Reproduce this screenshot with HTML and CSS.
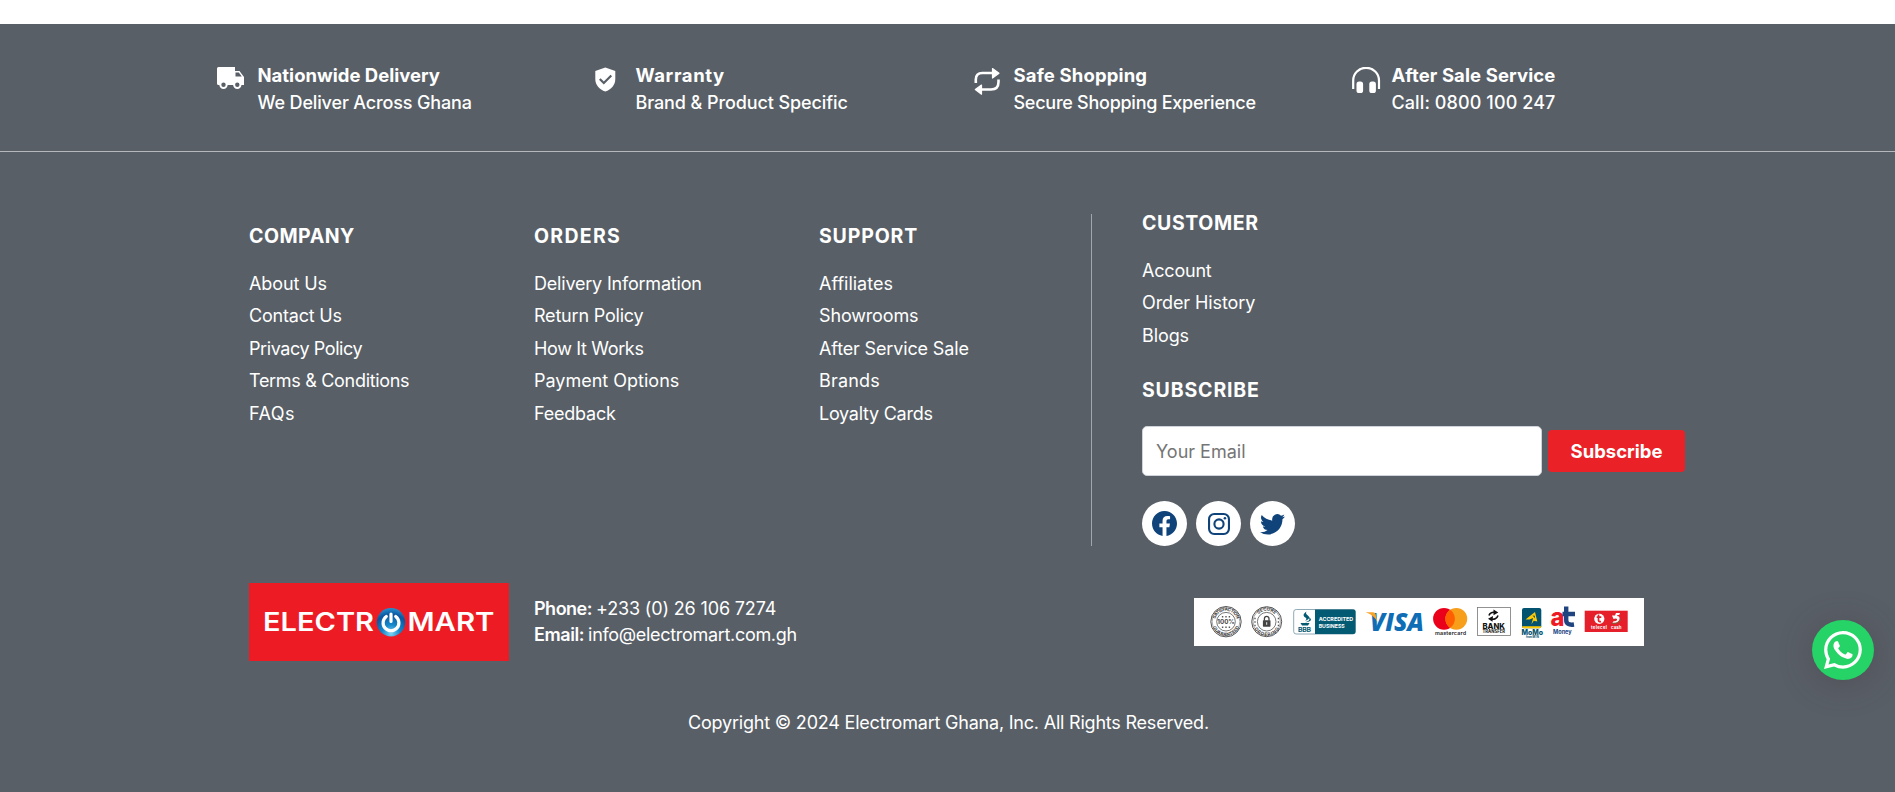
FILE: index.html
```
<!DOCTYPE html>
<html lang="en">
<head>
<meta charset="utf-8">
<title>Electromart Ghana</title>
<link rel="stylesheet" href="styles.css">
</head>
<body>
<footer class="footer">
  <section class="services">
    <div class="service">
      <svg class="service-icon" width="41" height="30" viewBox="0 0 41 30"><path fill="#fff" d="M1.500 0H18v4h4.500L27 10v8H1.500A1.500 1.500 0 0 1 0 16.500v-15A1.500 1.500 0 0 1 1.500 0z"/><path fill="#595f67" d="M18.500 5.600h3.300l3 3.900h-6.300z"/><g fill="#595f67" stroke="#fff" stroke-width="2"><circle cx="6.500" cy="17.800" r="3.200"/><circle cx="20.300" cy="17.800" r="3.200"/></g></svg>
      <div><p class="service-title">Nationwide Delivery</p><p class="service-text n15">We Deliver Across Ghana</p></div>
    </div>
    <div class="service">
      <svg class="service-icon" width="41" height="30" viewBox="0 0 41 30"><path fill="#fff" d="M10.300 .5 20.300 4v8c0 6-4 10.500-10 12.500C4.300 22.500.3 18 .3 12V4z"/><path fill="none" stroke="#595f67" stroke-width="2.200" d="m4.800 12 4 4 7.500-7.500"/></svg>
      <div><p class="service-title p60">Warranty</p><p class="service-text n10">Brand &amp; Product Specific</p></div>
    </div>
    <div class="service">
      <svg class="service-icon" width="41" height="30" viewBox="-1.500 0 41 30"><g fill="none" stroke="#fff" stroke-width="2.600"><path d="M1.300 16v-3.500q0-6.500 6.500-6.500H19M24 12.500V15q0 7.500-7.500 7.500H5"/></g><path fill="#fff" stroke="#fff" stroke-width="1.200" stroke-linejoin="round" d="m18 1.500 6.500 4.700L18 11zM7 18 .8 22.500 7 27.200z"/></svg>
      <div><p class="service-title p15">Safe Shopping</p><p class="service-text n25">Secure Shopping Experience</p></div>
    </div>
    <div class="service">
      <svg class="service-icon" width="41" height="30" viewBox="-1 0 41 30"><path fill="none" stroke="#fff" stroke-width="2.200" d="M1.200 22v-8.500a12.900 12.700 0 0 1 25.800 0V22"/><g fill="#fff"><rect x="4.500" y="14.500" width="6.600" height="11.500" rx="2.600"/><rect x="17.300" y="14.500" width="6.600" height="11.500" rx="2.600"/></g></svg>
      <div><p class="service-title p10">After Sale Service</p><p class="service-text p10">Call: 0800 100 247</p></div>
    </div>
  </section>

  <section class="links">
    <nav class="link-column">
      <h3 class="heading p50">COMPANY</h3>
      <ul><li class="n10">About Us</li><li class="n20">Contact Us</li><li class="n40">Privacy Policy</li><li class="n30">Terms &amp; Conditions</li><li class="p50">FAQs</li></ul>
    </nav>
    <nav class="link-column">
      <h3 class="heading p125">ORDERS</h3>
      <ul><li class="n20">Delivery Information</li><li class="n20">Return Policy</li><li class="n35">How It Works</li><li>Payment Options</li><li class="n20">Feedback</li></ul>
    </nav>
    <nav class="link-column">
      <h3 class="heading p85">SUPPORT</h3>
      <ul><li>Affiliates</li><li class="n15">Showrooms</li><li class="n15">After Service Sale</li><li class="p20">Brands</li><li class="n25">Loyalty Cards</li></ul>
    </nav>
    <div class="customer">
      <h3 class="heading p60">CUSTOMER</h3>
      <ul><li class="n20">Account</li><li class="n10">Order History</li><li class="n10">Blogs</li></ul>
      <h3 class="heading subscribe-heading p85">SUBSCRIBE</h3>
      <form class="subscribe">
        <input class="email" type="email" placeholder="Your Email">
        <button class="subscribe-button" type="button">Subscribe</button>
      </form>
      <div class="social">
        <a class="social-link"><svg width="25" height="25" viewBox="0 0 16 16" fill="#0f4379"><path d="M16 8.049c0-4.446-3.582-8.050-8-8.050C3.580 0 0 3.603 0 8.050c0 4.017 2.926 7.347 6.750 7.951v-5.625H4.720V8.050h2.030V6.275c0-2.017 1.195-3.131 3.022-3.131.876 0 1.791.157 1.791.157v1.980h-1.009c-.993 0-1.303.621-1.303 1.258v1.510h2.218l-.354 2.326H9.250V16c3.824-.604 6.750-3.934 6.750-7.951z"/></svg></a>
        <a class="social-link"><svg width="22" height="22" viewBox="0 0 22 22" fill="none" stroke="#0f4379" stroke-width="2.100"><rect x="1.050" y="1.050" width="19.900" height="19.900" rx="5.200"/><circle cx="11" cy="11" r="4.600"/><circle cx="16.900" cy="5.200" r="1.300" fill="#0f4379" stroke="none"/></svg></a>
        <a class="social-link"><svg width="25" height="25" viewBox="0 0 16 16" fill="#0f4379"><path d="M5.026 15c6.038 0 9.341-5.003 9.341-9.334 0-.14 0-.282-.006-.422A6.685 6.685 0 0 0 16 3.542a6.658 6.658 0 0 1-1.889.518 3.301 3.301 0 0 0 1.447-1.817 6.533 6.533 0 0 1-2.087.793A3.286 3.286 0 0 0 7.875 6.030a9.325 9.325 0 0 1-6.767-3.429 3.289 3.289 0 0 0 1.018 4.382A3.323 3.323 0 0 1 .64 6.575v.045a3.288 3.288 0 0 0 2.632 3.218 3.203 3.203 0 0 1-.865.115 3.230 3.230 0 0 1-.614-.057 3.283 3.283 0 0 0 3.067 2.277A6.588 6.588 0 0 1 .78 13.580a6.320 6.320 0 0 1-.78-.045A9.344 9.344 0 0 0 5.026 15z"/></svg></a>
      </div>
    </div>
  </section>

  <section class="brand-row">
    <svg class="logo" width="260" height="78" viewBox="0 0 260 78">
      <defs><radialGradient id="orb" cx=".5" cy=".9" r=".9"><stop offset="0" stop-color="#7fd3f3"/><stop offset=".35" stop-color="#1689cb"/><stop offset=".75" stop-color="#0a559f"/><stop offset="1" stop-color="#2691cf"/></radialGradient></defs>
      <rect width="260" height="78" fill="#ed1c24"/>
      <g fill="#fff" class="logo-text"><text x="14" y="48" textLength="111" lengthAdjust="spacingAndGlyphs">ELECTR</text><text x="158.500" y="48" textLength="87" lengthAdjust="spacingAndGlyphs">MART</text></g>
      <circle cx="142" cy="39.300" r="14.200" fill="url(#orb)"/>
      <path fill="none" stroke="#fff" stroke-width="3.200" stroke-linecap="round" d="M137.300 33.500a7.900 7.900 0 1 0 9.400 0M142 31v7.500"/>
    </svg>
    <div class="contact">
      <p><b class="n50">Phone:</b><span class="n15">+233 (0) 26 106 7274</span></p>
      <p><b class="n40">Email:</b><span class="n30">info@electromart.com.gh</span></p>
    </div>
    <svg class="payments" width="450" height="48" viewBox="0 0 450 48">
      <defs>
        <path id="arc-top" d="M-11 0a11 11 0 0 1 22 0"/>
        <path id="arc-bottom" d="M-14.300 0a14.300 14.300 0 0 0 28.600 0"/>
      </defs>
      <rect width="450" height="48" fill="#fff"/>
      <g transform="translate(32 23.700)" fill="none" stroke="#555">
        <circle r="15.200"/><circle r="13.900" stroke-width=".5"/><circle r="9.300" stroke-width=".8"/>
        <g fill="#444" stroke="none" font-weight="700" text-anchor="middle"><text font-size="4.600"><textPath href="#arc-top" startOffset="50%" textLength="29">SATISFACTION</textPath></text><text font-size="4.600"><textPath href="#arc-bottom" startOffset="50%" textLength="34">GUARANTEED</textPath></text><text y="2.300" font-size="6.200">100%</text></g>
        <path stroke-width="1.400" stroke-dasharray="1.400 2" d="M-4.100-5h8.500M-4.100 5.500h8.500"/>
      </g>
      <g transform="translate(72.700 23.700)" fill="none" stroke="#555">
        <circle r="15"/><circle r="13.700" stroke-width=".5"/><circle r="9.300" stroke-width=".8"/>
        <g fill="#444" stroke="none" font-weight="700" text-anchor="middle"><text font-size="4.600"><textPath href="#arc-top" startOffset="50%">SECURE</textPath></text><text font-size="4.600"><textPath href="#arc-bottom" startOffset="50%" textLength="30">ORDERING</textPath></text></g>
        <rect x="-3.800" y="-1.500" width="7.600" height="6.500" rx=".6" fill="#444" stroke="none"/><path stroke-width="1.300" stroke="#444" d="M-2.300-1v-2a2.300 2.300 0 0 1 4.600 0v2"/><path stroke="#fff" stroke-width=".9" d="M0 .5v2.600"/>
        <path stroke-width="1.300" stroke-dasharray="1.500 2" d="M-11.700-4v9M11.700-4v9"/>
      </g>
      <g><rect x="99.700" y="11.500" width="61.600" height="24.500" rx="2.500" fill="#fff" stroke="#7296a5" stroke-width=".8"/><path fill="#035a73" d="M121 11.500h38.500a2 2 0 0 1 2 2V34a2 2 0 0 1-2 2H121z"/>
        <path fill="#035a73" d="M112.500 13.500c-4 3-3.500 4.500-.7 6.300 1 1 .7 2-.8 3 5-1.500 5.500-3.600 2-6-1.200-1-1.200-2-.5-3.300zM114.500 19c2 2.500.8 4-3.300 5.400 6.300-.7 7.500-3.200 3.300-5.400zM106.500 25h9l-1.500 2.500h-6z"/>
        <text x="104" y="34" fill="#035a73" font-size="6.800" font-weight="700" textLength="13">BBB</text>
        <g fill="#fff" font-size="5.300" font-weight="700"><text x="124.700" y="23" textLength="34.500" lengthAdjust="spacingAndGlyphs">ACCREDITED</text><text x="124.700" y="29.800" textLength="26" lengthAdjust="spacingAndGlyphs">BUSINESS</text></g></g>
      <text x="176" y="32.800" class="visa" fill="#0f6db6" textLength="54" lengthAdjust="spacingAndGlyphs">VISA</text>
      <path fill="#f7a325" d="M171.700 14.300h7.300q2 0 2.600 2l1.900 8q-3-7-11.800-10z"/>
      <circle cx="250" cy="20.800" r="10.900" fill="#eb001b"/><circle cx="262.300" cy="20.800" r="10.900" fill="#f79e1b"/><path fill="#ff5f00" d="M256.150 11.800a10.900 10.900 0 0 1 0 18 10.900 10.900 0 0 1 0-18z"/>
      <text x="241" y="36.700" font-size="5.400" font-weight="600" fill="#222" textLength="31">mastercard</text>
      <rect x="283.400" y="9.400" width="33" height="28" fill="#fff" stroke="#777" stroke-width=".8"/>
      <path fill="none" stroke="#111" stroke-width="1.600" d="M295 17.500c1-3 4-3.500 7-3M304 17.500c-1 3-4 4.500-7 3.500"/><path fill="#111" d="m299.500 11.500 4.800 3-4.800 2.800zM299 18l-5 2.800 4.500 3z"/>
      <text x="288.500" y="31" font-size="7" font-weight="800" fill="#111" textLength="22.500" lengthAdjust="spacingAndGlyphs">BANK</text><text x="288.500" y="35" font-size="4.300" font-weight="700" fill="#111" textLength="22.500" lengthAdjust="spacingAndGlyphs">TRANSFER</text>
      <rect x="328" y="10" width="19.300" height="20.300" rx="2" fill="#035370"/><path fill="#ffcb05" d="M328 28.300h19.300q0 2-2 2H330q-2 0-2-2zM331.500 21.500 341 14l2.300 9.500-3.500-.8-2.400 3.500 1.700-6.200-3.500 1.500z"/><path fill="#035370" d="m338.500 17.500 2.300.3.200 2.400z"/>
      <text x="327.500" y="36.800" font-size="7" font-weight="800" fill="#035370" textLength="21.500" lengthAdjust="spacingAndGlyphs">MoMo</text><text x="332" y="40.300" font-size="2.800" font-weight="700" fill="#035370" textLength="13">from MTN</text>
      <text x="356.500" y="27.800" font-size="25" font-weight="800" fill="#ed1c24" textLength="14" lengthAdjust="spacingAndGlyphs">a</text>
      <path fill="none" stroke="#20447f" stroke-width="4.400" d="M372.200 8.500V22q0 5.600 7.800 4.500M368.500 16H381"/>
      <text x="359" y="35.800" font-size="5.600" font-weight="700" fill="#20447f" textLength="18.700">Money</text>
      <rect x="390.700" y="12.700" width="43" height="21.300" fill="#e5202b"/><circle cx="405.300" cy="20.800" r="5.100" fill="#fff"/><path fill="none" stroke="#e5202b" stroke-width="1.700" d="M404.500 16.500v6q.300 1.600 2.500 1.100M402.700 19.200h4.600"/>
      <path fill="#fff" d="M418 17.500h3l1-2.500h4l-.8 2h-1.700l-.5 1q3 .2 2.500 3t-4 3.700h-3l1-1.500c3 .3 3.800-.7 3.500-2.200q-.8-1-3.500 0z"/><path fill="none" stroke="#3b8b48" stroke-width=".7" d="M418.500 25.500q6.500 0 8-4"/>
      <g fill="#fff" font-size="4.300" font-weight="700"><text x="397" y="30.600" textLength="16">telecel</text><text x="417" y="30.600" textLength="10.500">cash</text></g>
    </svg>
  </section>

  <p class="copyright">Copyright © 2024 Electromart Ghana, Inc. All Rights Reserved.</p>
</footer>
<a class="whatsapp"><svg width="38" height="38" viewBox="0 0 16 16" fill="#fff"><path d="M13.601 2.326A7.854 7.854 0 0 0 7.994 0C3.627 0 .068 3.558.064 7.926c0 1.399.366 2.760 1.057 3.965L0 16l4.204-1.102a7.933 7.933 0 0 0 3.790.965h.004c4.368 0 7.926-3.558 7.930-7.930A7.898 7.898 0 0 0 13.600 2.326zM7.994 14.521a6.573 6.573 0 0 1-3.356-.92l-.24-.144-2.494.654.666-2.433-.156-.251a6.560 6.560 0 0 1-1.007-3.505c0-3.626 2.957-6.584 6.591-6.584a6.560 6.560 0 0 1 4.660 1.931 6.557 6.557 0 0 1 1.928 4.660c-.004 3.639-2.961 6.592-6.592 6.592zm3.615-4.934c-.197-.099-1.170-.578-1.353-.646-.182-.065-.315-.099-.445.099-.133.197-.513.646-.627.775-.114.133-.232.148-.43.050-.197-.1-.836-.308-1.592-.985-.59-.525-.985-1.175-1.103-1.372-.114-.198-.011-.304.088-.403.087-.088.197-.232.296-.346.1-.114.133-.198.198-.33.065-.134.034-.248-.015-.347-.05-.099-.445-1.076-.612-1.470-.16-.389-.323-.335-.445-.34-.114-.007-.247-.007-.38-.007a.729.729 0 0 0-.529.247c-.182.198-.691.677-.691 1.654 0 .977.71 1.916.81 2.049.098.133 1.394 2.132 3.383 2.992.47.205.84.326 1.129.418.475.152.904.129 1.246.080.38-.058 1.171-.48 1.338-.943.164-.464.164-.86.114-.943-.049-.084-.182-.133-.38-.232z"/></svg></a>
</body>
</html>
```
FILE: styles.css
```
* { box-sizing: border-box; }
body { margin: 0; padding-top: 24px; background: #fff; color: #fff; font: 400 18px/27px Inter, sans-serif; }
p, h3, ul { margin: 0; padding: 0; }
ul { list-style: none; }
svg { display: block; flex: none; }
.footer { min-height: 768px; background: #595f67; }

.services { display: grid; grid-template-columns: repeat(4, 378px); height: 128px; padding: 38px 0 0 216.500px; border-bottom: 1px solid #b5b8bc; }
.service { display: flex; }
.service-icon { margin-top: 5px; }
.service-title { font-size: 18.500px; font-weight: 700; }
.service-text { font-weight: 500; }

.links { display: grid; grid-template-columns: 285px 285px 272px 1fr; padding: 62px 0 0 249px; }
.link-column { padding-top: 10px; }
.heading { margin-bottom: 20px; font-size: 19.500px; line-height: 24px; font-weight: 700; }
.links li { line-height: 32.400px; }
.customer { padding-left: 50px; border-left: 1px solid #a2a5aa; }
.customer .heading { line-height: 18px; margin-bottom: 23px; }
.customer .subscribe-heading { margin: 29px 0 26.800px; }
.subscribe { display: flex; align-items: center; gap: 6px; height: 50px; margin-bottom: 25px; }
.email { width: 400px; height: 50px; padding: 0 13px; border: 1px solid #ced4da; border-radius: 5px; background: #fff; font: inherit; }
.email::placeholder { color: #757575; opacity: 1; }
.subscribe-button { width: 137px; height: 42px; margin-bottom: 1px; padding: 0; border: 0; border-radius: 4px; background: #ea2127; color: #fff; font: 700 18.500px Inter, sans-serif; }
.social { display: flex; gap: 9px; }
.social-link { display: flex; align-items: center; justify-content: center; width: 45px; height: 45px; border-radius: 50%; background: #fff; }

.brand-row { display: flex; align-items: center; margin-top: 37px; padding: 0 251px 0 249px; }
.logo-text { font: 600 25px Inter, sans-serif; }
.contact { margin-left: 25px; line-height: 26px; }
.contact b { display: inline-block; font-weight: 600; margin-right: 4px; }
.payments { margin-left: auto; font-family: Inter, sans-serif; }
.visa { font: italic 800 25px "Open Sans", sans-serif; }
.copyright { margin-top: 48px; padding-left: 2px; text-align: center; letter-spacing: -.210px; }

.whatsapp { position: fixed; left: 1812px; top: 620px; display: flex; align-items: center; justify-content: center; width: 62px; height: 60px; border-radius: 50%; background: #25d366; box-shadow: 0 4px 32px rgba(70, 60, 66, .45); }

/* Letter-spacing steps, in hundredths of a pixel */
.n50 { letter-spacing: -.500px; }
.n40 { letter-spacing: -.420px; }
.n35 { letter-spacing: -.350px; }
.n30 { letter-spacing: -.310px; }
.n25 { letter-spacing: -.260px; }
.n20 { letter-spacing: -.200px; }
.n15 { letter-spacing: -.150px; }
.n10 { letter-spacing: -.100px; }
.p10 { letter-spacing: .100px; }
.p15 { letter-spacing: .150px; }
.p20 { letter-spacing: .200px; }
.p50 { letter-spacing: .500px; }
.p60 { letter-spacing: .620px; }
.p85 { letter-spacing: .850px; }
.p125 { letter-spacing: 1.280px; }
```
